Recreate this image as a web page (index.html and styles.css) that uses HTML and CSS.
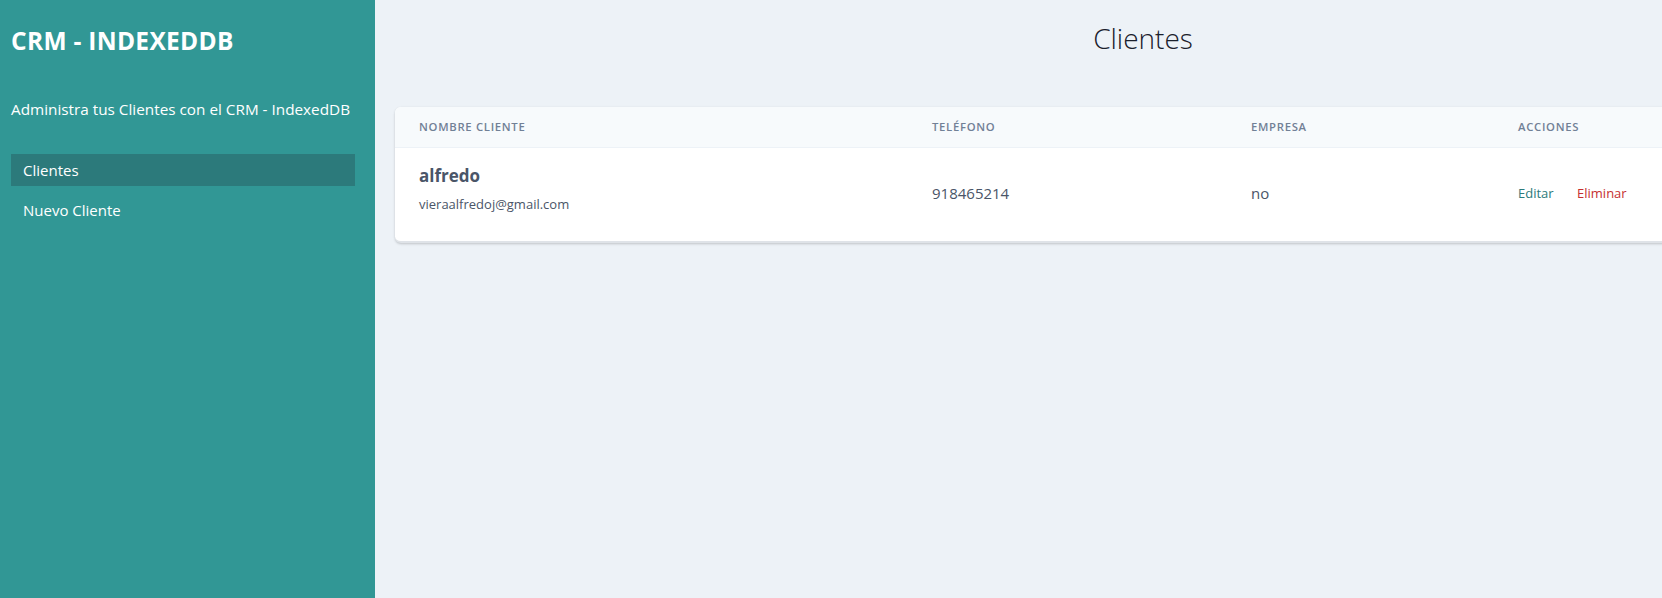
FILE: index.html
```html
<!DOCTYPE html>
<html lang="es">
<head>
<meta charset="utf-8">
<title>CRM - IndexedDB</title>
<link rel="stylesheet" href="styles.css">
</head>
<body>
<div class="layout">
  <aside class="sidebar">
    <h1 class="brand">CRM - INDEXEDDB</h1>
    <p class="tagline">Administra tus Clientes con el CRM - IndexedDB</p>
    <nav class="nav">
      <a class="nav-link active" href="#">Clientes</a>
      <a class="nav-link" href="#">Nuevo Cliente</a>
    </nav>
  </aside>
  <main class="main">
    <h2 class="page-title">Clientes</h2>
    <div class="card">
      <table class="table">
        <colgroup>
          <col class="c1"><col class="c2"><col class="c3"><col class="c4">
        </colgroup>
        <thead>
          <tr>
            <th>Nombre Cliente</th>
            <th>Teléfono</th>
            <th>Empresa</th>
            <th>Acciones</th>
          </tr>
        </thead>
        <tbody>
          <tr>
            <td class="client">
              <p class="client-name">alfredo</p>
              <p class="client-email">vieraalfredoj@gmail.com</p>
            </td>
            <td class="phone">918465214</td>
            <td class="company">no</td>
            <td class="actions">
              <a class="edit" href="#">Editar</a>
              <a class="delete" href="#">Eliminar</a>
            </td>
          </tr>
        </tbody>
      </table>
    </div>
  </main>
</div>
</body>
</html>
```

FILE: styles.css
```css
* { box-sizing: border-box; }
html, body { margin: 0; padding: 0; }
body {
  font-family: "Open Sans", "Noto Sans", sans-serif;
  background: #edf2f7;
  overflow: hidden;
  width: 1662px;
  height: 598px;
}
.layout {
  display: flex;
  height: 598px;
}
.sidebar {
  flex: 0 0 375px;
  background: #319795;
  color: #fff;
  padding: 0 20px 0 11px;
}
.brand {
  margin: 23px 0 0;
  font-size: 24.5px;
  line-height: 36px;
  font-weight: 700;
  letter-spacing: 0.3px;
}
.tagline {
  margin: 38px 0 0;
  font-size: 15.3px;
  line-height: 24px;
}
.nav {
  display: flex;
  flex-direction: column;
  gap: 8px;
  margin-top: 33px;
}
.nav-link {
  display: block;
  color: #fff;
  text-decoration: none;
  font-size: 15px;
  line-height: 32px;
  padding: 0 12px;
}
.nav-link.active { background: #2c7a7b; }
.main {
  flex: 0 0 1536px;
  padding: 20px 20px 0;
}
.page-title {
  margin: 0;
  text-align: center;
  font-size: 28px;
  line-height: 36px;
  font-weight: 300;
  color: #1a202c;
}
.card {
  margin-top: 51px;
  background: #fff;
  border-radius: 6px;
  box-shadow: 0 1px 3px rgba(0,0,0,0.12), 0 1px 2px rgba(0,0,0,0.08);
  border-bottom: 2px solid #dfe3e8;
  overflow: hidden;
}
.table {
  width: 100%;
  border-collapse: collapse;
  table-layout: fixed;
}
.c1 { width: 513px; }
.c2 { width: 319px; }
.c3 { width: 267px; }
.table th {
  background: #f7fafc;
  border-bottom: 1px solid #edf2f7;
  text-align: left;
  padding: 12px 24px;
  font-size: 11.3px;
  line-height: 16px;
  font-weight: 600;
  text-transform: uppercase;
  letter-spacing: 0.7px;
  color: #718096;
}
.table td {
  padding: 16px 24px 20px;
  vertical-align: middle;
  color: #4a5568;
}
.client-name {
  margin: 0;
  font-size: 17px;
  line-height: 24px;
  font-weight: 700;
  color: #4a5568;
}
.client-email {
  margin: 0;
  font-size: 13px;
  line-height: 33px;
  color: #4a5568;
}
.phone { font-size: 15px; }
.company { font-size: 15px; color: #718096; }
.actions { font-size: 13px; }
.actions a { text-decoration: none; }
.edit { color: #2c7a7b; margin-right: 20px; }
.delete { color: #c53030; }
```
